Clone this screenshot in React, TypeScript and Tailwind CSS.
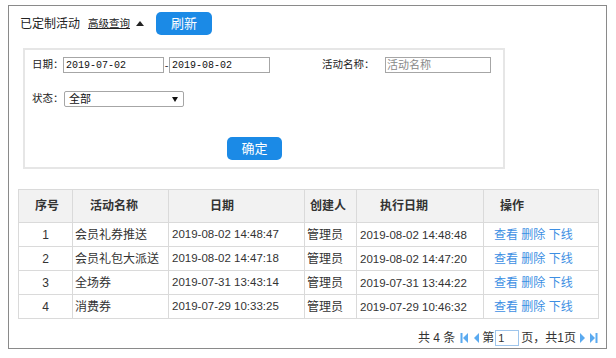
import React from 'react';

type Row = { id: number; name: string; date: string; creator: string; execDate: string };

const ROWS: Row[] = [
  { id: 1, name: '会员礼券推送', date: '2019-08-02 14:48:47', creator: '管理员', execDate: '2019-08-02 14:48:48' },
  { id: 2, name: '会员礼包大派送', date: '2019-08-02 14:47:18', creator: '管理员', execDate: '2019-08-02 14:47:20' },
  { id: 3, name: '全场券', date: '2019-07-31 13:43:14', creator: '管理员', execDate: '2019-07-31 13:44:22' },
  { id: 4, name: '消费券', date: '2019-07-29 10:33:25', creator: '管理员', execDate: '2019-07-29 10:46:32' },
];

const FONT = "font-['Liberation_Sans','Noto_Sans_CJK_SC',sans-serif]";

const PageIcon: React.FC<{ kind: 'first' | 'prev' | 'next' | 'last' }> = ({ kind }) => (
  <svg width="9" height="12" viewBox="0 0 9 12" className="shrink-0">
    {kind === 'first' && (
      <>
        <rect x="0.5" y="1" width="2" height="10" fill="#5aaaf0" />
        <polygon points="8,1 3,6 8,11" fill="#5aaaf0" />
      </>
    )}
    {kind === 'prev' && <polygon points="7,1 2,6 7,11" fill="#5aaaf0" />}
    {kind === 'next' && <polygon points="2,1 7,6 2,11" fill="#5aaaf0" />}
    {kind === 'last' && (
      <>
        <polygon points="1,1 6,6 1,11" fill="#5aaaf0" />
        <rect x="6.5" y="1" width="2" height="10" fill="#5aaaf0" />
      </>
    )}
  </svg>
);

export default function App() {
  return (
    <div className={`w-[616px] h-[358px] bg-white overflow-hidden pt-[5px] pl-[8px] text-[12px] text-[#333] ${FONT}`}>
      <div className="w-[599px] h-[344px] border border-[#8a8a8a]">
        {/* top bar */}
        <div className="flex items-center pl-[11px] pt-[6px] h-[29px]">
          <span className="text-[12px] text-[#222]">已定制活动</span>
          <span className="ml-[8px] text-[10.5px] text-[#222] underline">高级查询</span>
          <span className="ml-[6px] w-0 h-0 border-l-[4px] border-r-[4px] border-b-[5px] border-l-transparent border-r-transparent border-b-[#222]" />
          <button className="ml-[12px] w-[56px] h-[23px] rounded-[5px] bg-[#1b8ae6] text-white text-[13px]">刷新</button>
        </div>

        {/* filter panel */}
        <div className="ml-[14px] mt-[13px] w-[482px] h-[121px] border-2 border-[#e6e6e6] pl-[7px] pt-[7px] flex flex-col">
          <div className="flex items-center h-[16px]">
            <span className="w-[31px] shrink-0 whitespace-nowrap text-[10.5px] text-[#222]">日期：</span>
            <input
              readOnly
              value="2019-07-02"
              className="w-[101px] h-[16px] border border-[#a6a6a6] px-[2px] text-[10px] font-['Liberation_Mono',monospace] text-[#111] outline-none"
            />
            <span className="w-[5px] text-center text-[11px] leading-none">-</span>
            <input
              readOnly
              value="2019-08-02"
              className="w-[101px] h-[16px] border border-[#a6a6a6] px-[2px] text-[10px] font-['Liberation_Mono',monospace] text-[#111] outline-none"
            />
            <span className="ml-[52px] w-[63px] shrink-0 whitespace-nowrap text-[10.5px] text-[#222]">活动名称：</span>
            <input
              readOnly
              placeholder="活动名称"
              className="w-[106px] h-[16px] border border-[#a6a6a6] px-[1px] text-[11px] placeholder:text-[#888] outline-none"
            />
          </div>
          <div className="flex items-center h-[16px] mt-[18px]">
            <span className="w-[32px] shrink-0 whitespace-nowrap text-[10.5px] text-[#222]">状态：</span>
            <div className="w-[120px] h-[16px] border border-[#a6a6a6] rounded-[2px] flex items-center justify-between pl-[4px] pr-[5px]">
              <span className="text-[11px] text-[#111]">全部</span>
              <span className="w-0 h-0 border-l-[3px] border-r-[3px] border-t-[5px] border-l-transparent border-r-transparent border-t-[#111]" />
            </div>
          </div>
          <div className="mt-[30px] ml-[195px]">
            <button className="w-[55px] h-[23px] rounded-[5px] bg-[#1b8ae6] text-white text-[13px]">确定</button>
          </div>
        </div>

        {/* table */}
        <table className="ml-[9px] mt-[20px] w-[580px] table-fixed border-collapse text-[12px]">
          <colgroup>
            <col className="w-[54px]" />
            <col className="w-[96px]" />
            <col className="w-[136px]" />
            <col className="w-[52px]" />
            <col className="w-[127px]" />
            <col className="w-[115px]" />
          </colgroup>
          <thead>
            <tr className="h-[33px] bg-[#f2f2f2] text-[12px] font-bold text-[#333]">
              <th className="border border-[#dadada] font-bold text-left pl-[16px]">序号</th>
              <th className="border border-[#dadada] font-bold text-left pl-[17px]">活动名称</th>
              <th className="border border-[#dadada] font-bold text-left pl-[41px]">日期</th>
              <th className="border border-[#dadada] font-bold text-left pl-[5px]">创建人</th>
              <th className="border border-[#dadada] font-bold text-left pl-[23px]">执行日期</th>
              <th className="border border-[#dadada] font-bold text-left pl-[16px]">操作</th>
            </tr>
          </thead>
          <tbody>
            {ROWS.map((r) => (
              <tr key={r.id} className="h-[24px]">
                <td className="border border-[#dadada] text-center">{r.id}</td>
                <td className="border border-[#dadada] pl-[2px] whitespace-nowrap">{r.name}</td>
                <td className="border border-[#dadada] pl-[3px] whitespace-nowrap text-[11.5px]">{r.date}</td>
                <td className="border border-[#dadada] pl-[2px] whitespace-nowrap">{r.creator}</td>
                <td className="border border-[#dadada] pl-[3px] pt-[2px] whitespace-nowrap text-[11.5px]">{r.execDate}</td>
                <td className="border border-[#dadada] pl-[10px] whitespace-nowrap text-[#3d8fe3]">
                  <span>查看</span> <span>删除</span> <span>下线</span>
                </td>
              </tr>
            ))}
          </tbody>
        </table>

        {/* pagination */}
        <div className="flex items-center justify-end mt-[11px] pr-[8px] h-[16px] text-[12px] text-[#333]">
          <span>共 4 条</span>
          <span className="ml-[5px]"><PageIcon kind="first" /></span>
          <span className="ml-[3px]"><PageIcon kind="prev" /></span>
          <span className="ml-[1px]">第</span>
          <input
            readOnly
            value="1"
            className="ml-[1px] w-[24px] h-[16px] border border-[#9ec5ec] px-[2px] text-[11px] outline-none"
          />
          <span className="ml-[2px]">页，共1页</span>
          <span className="ml-[2px]"><PageIcon kind="next" /></span>
          <span className="ml-[2px]"><PageIcon kind="last" /></span>
        </div>
      </div>
    </div>
  );
}
